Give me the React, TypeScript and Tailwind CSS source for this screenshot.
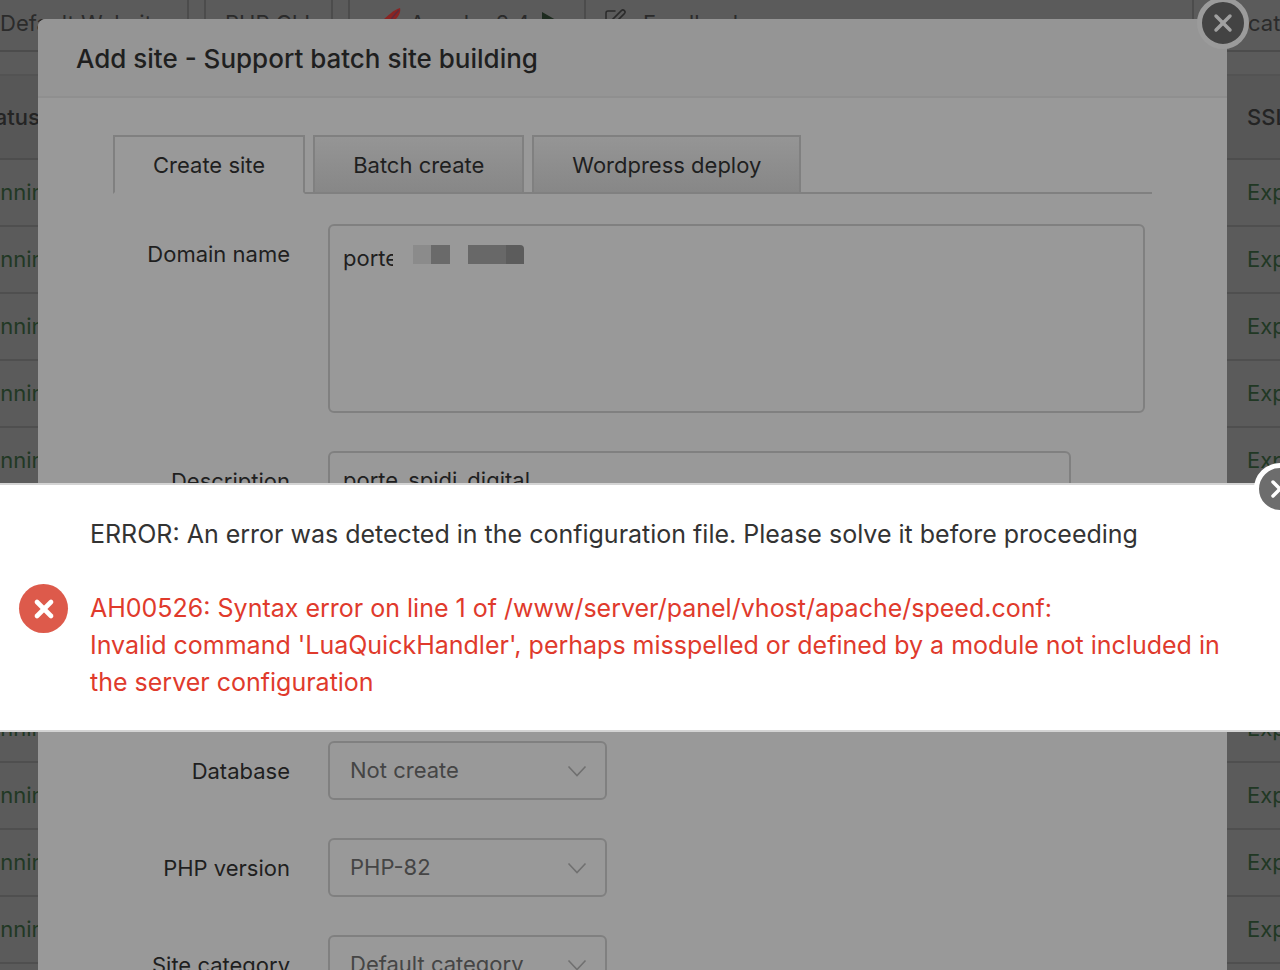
import { useState } from 'react'
import { X, SquarePen } from 'lucide-react'

const tabs = ['Create site', 'Batch create', 'Wordpress deploy']
const rows = Array.from({ length: 13 }, (_, i) => i)

interface SelectRowProps {
  id: string
  label: string
  option: string
}

function Label({ id, text }: { id: string; text: string }) {
  return (
    <label htmlFor={id} className="w-[177px] shrink-0 text-right leading-[60px] text-[#1f1f1f]">
      {text}
    </label>
  )
}

function SelectRow({ id, label, option }: SelectRowProps) {
  return (
    <div className="flex h-[59px] gap-[38px]">
      <Label id={id} text={label} />
      <div className="relative w-[279px]">
        <select
          id={id}
          className="h-full w-full appearance-none rounded-md border-2 border-[#808080] bg-transparent px-5 text-[#454545] outline-none">
          <option>{option}</option>
        </select>
        <svg
          viewBox="0 0 20 12"
          className="pointer-events-none absolute top-6 right-5 h-3 w-5"
          fill="none"
          stroke="#707070"
          strokeWidth="1.6">
          <path d="M1.5 1.5 L10 10.5 L18.5 1.5" />
        </svg>
      </div>
    </div>
  )
}

function Toolbar() {
  return (
    <div className="flex h-[52px] items-start overflow-hidden border-b-2 border-[#4c4c4c] leading-[46px] whitespace-nowrap text-[#2b2b2b]">
      <div className="h-full w-[189px] shrink-0 border-r-2 border-[#4c4c4c]">Default Website</div>
      <div className="ml-[15px] h-full w-[129px] shrink-0 border-x-2 border-[#4c4c4c] pl-[19px]">PHP CLI</div>
      <div className="ml-[15px] flex h-full w-[238px] shrink-0 border-x-2 border-[#4c4c4c] pl-8">
        <svg viewBox="0 0 20 28" className="mt-2 h-7 w-5 shrink-0">
          <path d="M18 0 C11 2 6 8 2 11 L0 20 C4 21 9 17 13 12 C17 8 19 4 18 0 Z" fill="#8a2422" />
          <path d="M17 2 C12 7 8 12 4 20" stroke="#5d2a3c" strokeWidth="1.5" fill="none" />
        </svg>
        <span className="ml-2">Apache 2.4</span>
        <svg viewBox="0 0 14 18" className="mt-3 ml-3 h-[18px] w-[14px] shrink-0">
          <path d="M0 0 L14 8 L0 16 Z" fill="#1d2b1f" />
        </svg>
      </div>
      <div className="flex h-full flex-1 pl-[17px]">
        <SquarePen className="mt-2 h-6 w-6 shrink-0" strokeWidth={1.5} />
        <span className="ml-4">Feedback</span>
      </div>
      <div className="h-full w-[88px] shrink-0 border-l-2 border-[#4c4c4c] pl-[54px]">cat</div>
    </div>
  )
}

function SiteTable() {
  return (
    <table className="mt-[22px] w-full table-fixed border-t-2 border-[#535353] text-left">
      <thead>
        <tr className="h-[84px] border-b-2 border-[#4d4d4d] bg-[#575757] text-[#242424]">
          <th className="font-medium">
            <span className="-ml-[27px]">Status</span>
          </th>
          <th className="w-[33px] font-medium">SSL</th>
        </tr>
      </thead>
      <tbody>
        {rows.map(row => (
          <tr key={row} className="h-[67px] border-b-2 border-[#4f4f4f] text-[#213824]">
            <td>
              <a href="#status" className="-ml-[27px]">Running</a>
            </td>
            <td>
              <a href="#ssl">Exp</a>
            </td>
          </tr>
        ))}
      </tbody>
    </table>
  )
}

export default function App() {
  const [active, setActive] = useState(tabs[0])

  return (
    <div className="relative h-screen overflow-hidden bg-[#5b5b5b] font-['Inter','Liberation_Sans',sans-serif] text-[22px]">
      <Toolbar />
      <SiteTable />

      {/* Add site window */}
      <section className="absolute top-[19px] right-[53px] bottom-0 left-[38px] rounded-t-lg bg-[#999999]">
        <header className="flex h-[79px] items-center rounded-t-lg border-b-2 border-[#8f8f8f] bg-[#959595] px-[38px] pt-0.5">
          <h1 className="text-[26px] font-medium text-[#1f1f1f]">Add site - Support batch site building</h1>
        </header>
        <button
          aria-label="Close window"
          className="absolute -top-[22px] -right-[22px] flex h-[52px] w-[52px] items-center justify-center rounded-full border-[5px] border-[#9b9b9b] bg-[#434343] text-[#a0a0a0]">
          <X className="h-7 w-7" strokeWidth={3} />
        </button>

        <div className="h-[872px] overflow-hidden px-[75px] pt-[37px]">
          <div className="flex gap-2 bg-[linear-gradient(#808080,#808080)] bg-[length:100%_2px] bg-bottom bg-no-repeat">
            {tabs.map(tab => (
              <button
                key={tab}
                onClick={() => setActive(tab)}
                className={`h-[59px] border-2 px-[38px] pt-0.5 text-[#1f1f1f] ${active === tab ? 'border-[#808080] border-b-[#999999] bg-[#999999]' : 'border-[#808080] bg-linear-to-b from-[#959595] to-[#878787]'}`}>
                {tab}
              </button>
            ))}
          </div>

          <form className="flex flex-col pt-[30px]">
            <div className="flex gap-[38px]">
              <Label id="domain" text="Domain name" />
              <div className="relative mr-[7px] h-[189px] flex-1">
                <textarea
                  id="domain"
                  defaultValue="porte"
                  className="block h-full w-full resize-none rounded-md border-2 border-[#808080] bg-transparent px-[13px] py-4 leading-8 text-[#1f1f1f] outline-none"
                />
                {/* masked part of the domain */}
                <div className="pointer-events-none absolute top-[21px] left-[65px] flex h-[19px]">
                  <span className="h-7 w-5 bg-[#999999]" />
                  <span className="w-[18px] bg-[#8b8b8b]" />
                  <span className="w-[19px] bg-[#6a6a6a]" />
                  <span className="ml-[18px] w-[38px] bg-[#686868]" />
                  <span className="w-[18px] rounded-tr bg-[#5c5c5c]" />
                </div>
              </div>
            </div>

            <div className="mt-[38px] flex h-[59px] gap-[38px]">
              <Label id="description" text="Description" />
              <input
                id="description"
                defaultValue="porte_spidi_digital"
                className="mr-[81px] min-w-0 flex-1 rounded-md border-2 border-[#808080] bg-transparent px-[13px] text-[#1f1f1f] outline-none"
              />
            </div>

            <div className="mt-[231px] flex flex-col gap-[38px]">
              <SelectRow id="database" label="Database" option="Not create" />
              <SelectRow id="php" label="PHP version" option="PHP-82" />
              <SelectRow id="category" label="Site category" option="Default category" />
            </div>
          </form>
        </div>
      </section>

      {/* Error message */}
      <section role="alertdialog" className="absolute inset-x-0 top-[483px] border-y-2 border-[#d4d4d4] bg-white">
        <button
          aria-label="Close message"
          className="absolute -top-[22px] -right-[26px] flex h-[52px] w-[52px] items-center justify-center rounded-full border-[5px] border-white bg-[#6d6d6d] text-white">
          <X className="h-7 w-7" strokeWidth={3} />
        </button>
        <div className="flex items-center gap-[22px] pt-[31px] pr-10 pb-[29px] pl-[19px]">
          <span className="flex h-[49px] w-[49px] shrink-0 items-center justify-center rounded-full bg-[#dd5a4b] text-white">
            <X className="h-7 w-7" strokeWidth={4} />
          </span>
          <div className="text-[25px] leading-[37px] text-[#333333]">
            <p>ERROR: An error was detected in the configuration file. Please solve it before proceeding</p>
            <p className="pt-[37px] text-[#e03a2c]">
              AH00526: Syntax error on line 1 of /www/server/panel/vhost/apache/speed.conf:
              <br />
              Invalid command 'LuaQuickHandler', perhaps misspelled or defined by a module not included in the server
              configuration
            </p>
          </div>
        </div>
      </section>
    </div>
  )
}
